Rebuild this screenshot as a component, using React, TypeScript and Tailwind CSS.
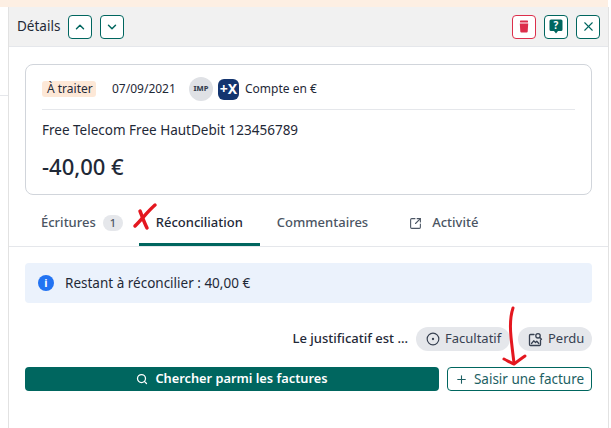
import React from 'react';
import { ChevronUp, ChevronDown, X, SquareArrowOutUpRight, Search, Plus, CircleDot } from 'lucide-react';

const iconBtn = 'w-6 h-6 flex items-center justify-center rounded-[4px] border border-[#00665f] bg-white text-[#00665f]';

const App: React.FC = () => {
  return (
    <div className="relative w-[611px] h-[428px] bg-white overflow-hidden font-['Noto_Sans',sans-serif] text-[13.5px] text-[#1f2937] flex flex-col">
      <div className="h-[7px] bg-[#fdefe3] mr-[3px] shrink-0" />
      <div className="flex flex-1 min-h-0">
        {/* left sliver of the list behind the panel */}
        <div className="w-[8px] shrink-0 pt-[88px]">
          <div className="h-px bg-[#e5e7eb]" />
        </div>
        <div className="flex-1 border-x-[1px] border-[#e2e2e2] mr-[2px] flex flex-col min-w-0">
          <div className="h-[40px] shrink-0 bg-[#f1f1f1] border-b border-[#e5e7eb] flex items-center pl-[8px] pr-[8px]">
            <span className="w-[43px] mr-[8px] whitespace-nowrap">Détails</span>
            <button className={iconBtn + ' mr-[8px]'}><ChevronUp size={14} strokeWidth={2.5} /></button>
            <button className={iconBtn}><ChevronDown size={14} strokeWidth={2.5} /></button>
            <div className="ml-auto flex gap-[8px]">
              <button className="w-6 h-6 flex items-center justify-center rounded-[4px] border border-[#dc2f4b] bg-white">
                <svg width="10" height="13" viewBox="0 0 10 13" fill="#dc2f4b">
                  <rect x="1" y="0.5" width="8" height="2" rx="0.6" />
                  <path d="M0.8 3.4h8.4l-.5 8.2a1 1 0 0 1-1 .9H2.3a1 1 0 0 1-1-.9z" />
                </svg>
              </button>
              <button className={iconBtn}>
                <svg width="14" height="15" viewBox="0 0 14 15">
                  <path d="M2 0.5h10a1.5 1.5 0 0 1 1.5 1.5v8.5a1.5 1.5 0 0 1-1.5 1.5H9l-2 2.4L5 12H2A1.5 1.5 0 0 1 .5 10.500V2A1.5 1.500 0 0 1 2 .5z" fill="#00665f" />
                  <text x="7" y="9.800" textAnchor="middle" fontSize="10" fontWeight="700" fill="#ffffff" fontFamily="'Noto Sans',sans-serif">?</text>
                </svg>
              </button>
              <button className={iconBtn}><X size={15} strokeWidth={1.75} /></button>
            </div>
          </div>

          <div className="flex-1 min-h-0">
            <div className="mx-[16px] mt-[17px] h-[131px] rounded-[8px] border border-[#d1d5db] px-[16px] pt-[12px]">
              <div className="flex items-center h-[24px] box-content text-[12px] border-b border-[#e5e7eb] pb-[8px]">
                <span className="bg-[#fde8d7] rounded-[3px] px-[5px] h-[16px] leading-[16px] w-[54px] whitespace-nowrap">À traiter</span>
                <span className="ml-[16px] w-[61px]">07/09/2021</span>
                <span className="ml-[16px] w-6 h-6 rounded-full bg-[#dfe1e5] flex items-center justify-center text-[7.500px] font-extrabold text-[#374151]">IMP</span>
                <span className="ml-[5px] w-[21px] h-[21px] rounded-[6px] bg-[#14356f] flex items-center justify-center text-white text-[14px] leading-none font-bold">+X</span>
                <span className="ml-[6px]">Compte en €</span>
              </div>
              <div className="mt-[11px] leading-[18px]">Free Telecom Free HautDebit 123456789</div>
              <div className="mt-[13px] text-[22px] leading-[28px] font-medium">-40,00 €</div>
            </div>

            <div className="h-[52px] border-b border-[#e5e7eb] flex text-[#4b5563] font-medium text-[13px]">
              <div className="ml-[32px] flex items-center pt-[5px]">
                Écritures
                <span className="ml-[7px] w-[20px] h-[16px] rounded-full bg-[#e5e7eb] flex items-center justify-center text-[11px]">1</span>
              </div>
              <div className="ml-[16px] w-[121px] flex items-center justify-center text-[#1f2937] border-b-[3px] border-[#00665f] pt-[8px]">Réconciliation</div>
              <div className="ml-[17px] flex items-center pt-[5px]">Commentaires</div>
              <div className="ml-[41px] flex items-center pt-[5px]">
                <SquareArrowOutUpRight size={13} strokeWidth={2} className="mr-[10px]" />
                Activité
              </div>
            </div>

            <div className="mx-[16px] mt-[16px] h-[40px] rounded-[4px] bg-[#ebf2fc] flex items-center px-[13px]">
              <span className="w-4 h-4 rounded-full bg-[#2273f2] flex items-center justify-center text-white text-[11px] font-bold mr-[11px]">i</span>
              Restant à réconcilier : 40,00 €
            </div>

            <div className="mx-[16px] mt-[24px] flex items-center justify-end h-[24px] text-[13px]">
              <span className="mr-[8px] font-medium">Le justificatif est ...</span>
              <span className="h-6 w-[94px] rounded-full bg-[#e5e7eb] flex items-center pl-[10px] text-[#374151] whitespace-nowrap">
                <CircleDot size={14} className="mr-[5px] shrink-0" />
                Facultatif
              </span>
              <span className="ml-[8px] h-6 w-[74px] rounded-full bg-[#e5e7eb] flex items-center pl-[10px] text-[#374151] whitespace-nowrap">
                <svg width="15" height="15" viewBox="0 0 15 15" fill="none" stroke="#374151" strokeWidth="1.300" className="mr-[5px] shrink-0" strokeLinecap="round" strokeLinejoin="round">
                  <path d="M6 2.500H2.500a1 1 0 0 0-1 1v9a1 1 0 0 0 1 1h9a1 1 0 0 0 1-1V8" />
                  <circle cx="10" cy="3.800" r="2.200" />
                  <path d="M11.700 5.500l1.800 1.800" />
                  <path d="M3.500 11.500l2.200-2.700 1.800 1.700 1.300-1.300 2 2.300" />
                </svg>
                Perdu
              </span>
            </div>

            <div className="mx-[16px] mt-[16px] flex gap-[8px]">
              <button className="flex-1 h-6 rounded-[4px] bg-[#00665f] text-white text-[12.800px] font-semibold flex items-center justify-center">
                <Search size={12} strokeWidth={2.5} className="mr-[7px]" />
                Chercher parmi les factures
              </button>
              <button className="w-[145px] h-6 rounded-[4px] border border-[#00665f] bg-white text-[#1d5f63] flex items-center justify-center">
                <Plus size={13} strokeWidth={2} className="mr-[6px]" />
                Saisir une facture
              </button>
            </div>
          </div>
        </div>
      </div>

      {/* hand drawn red marks over the capture */}
      <svg className="absolute left-[130px] top-[200px]" width="30" height="32" viewBox="0 0 30 32" fill="none" stroke="#e4171f" strokeWidth="3.500" strokeLinecap="round">
        <path d="M25 5C19 10 12 19 5 26" />
        <path d="M10 11C12 16 14 22 17 28" />
      </svg>
      <svg className="absolute left-[498px] top-[303px]" width="40" height="66" viewBox="0 0 40 66" fill="none" stroke="#e4171f" strokeWidth="3" strokeLinecap="round" strokeLinejoin="round">
        <path d="M15 5C12 14 12 24 13 34C14 44 15 52 16 60" />
        <path d="M6 56C10 58 13 60 16 61C20 58 24 55 27 53" />
      </svg>
    </div>
  );
};

export default App;
